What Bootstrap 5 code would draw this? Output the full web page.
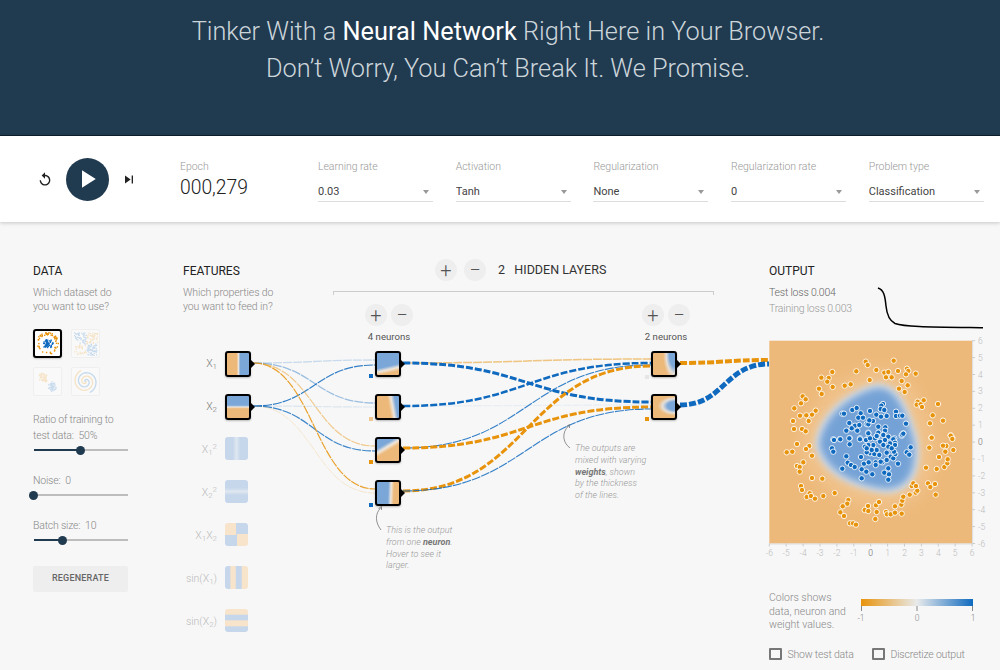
<!DOCTYPE html>
<html lang="en">
<head>
    <meta charset="UTF-8">
    <meta name="viewport" content="width=device-width, initial-scale=1.0">
    <title>Tinker With a Neural Network</title>
    <link rel="stylesheet" href="https://cdn.jsdelivr.net/npm/bootstrap@5.3.0/dist/css/bootstrap.min.css">
    <style>
        :root { --dark: #203a50; --heat-o: #edb97a; --heat-b: #7aa6d8; --fade-o: #f8e3cb; --fade-b: #c6d7ec; }
        html, body { height: 670px; overflow: hidden; }
        body { background: #f7f7f7; font-family: Roboto, "Liberation Sans", sans-serif; font-weight: 300; color: #777; }

        .page-head { height: 136px; background: var(--dark); border-bottom: 1px solid #0e1f2a; padding: 13px 0 0 16px; color: #ccd5da; }
        .page-head h1 { font-size: 25.3px; line-height: 37px; font-weight: 300; margin: 0; }
        .page-head b { font-weight: 400; color: #fff; }

        .ctl-bar { height: 86px; background: #fff; box-shadow: 0 1px 4px rgba(0,0,0,.2); padding: 24px 0 0 37px; position: relative; }
        .ctl-play { margin-top: -2.5px; }
        .icon-btn { border: 0; background: none; padding: 0; width: 16px; height: 43px; display: flex; align-items: center; justify-content: center; }
        .play-btn { width: 43px; height: 43px; border-radius: 50%; background: var(--dark); border: 0; padding: 0; display: flex; align-items: center; justify-content: center; margin: 0 12.5px; }
        .ctl-group { width: 115px; margin-right: 22.7px; }
        .ctl-group.epoch-box { width: 138px; margin: 0 0 0 43px; }
        .ctl-label { font-size: 10.5px; letter-spacing: -.05px; line-height: 14px; color: #999; display: block; margin: 0; }
        .epoch-val { font-size: 19.3px; line-height: 24px; color: #222; margin-top: 1.5px; font-weight: 300; }
        .ctl-pick { margin-top: 6.5px; position: relative; }
        .ctl-pick::after { content: ""; position: absolute; right: 4px; top: 9px; border: 3.5px solid transparent; border-top: 4px solid #999; border-bottom: 0; }
        .ctl-pick .form-select { background-image: none; background-color: transparent; border: 0; border-bottom: 1px solid #ddd; border-radius: 0; padding: 0; height: 21.5px; font-size: 11px; font-weight: 400; line-height: 21px; color: #444; box-shadow: none; font-family: inherit; }

        .work-area { height: 448px; }
        .sec-title { font-size: 12px; line-height: 16px; font-weight: 400; color: #222; text-transform: uppercase; margin: 41px 0 0; }
        .sec-note { font-size: 10.5px; letter-spacing: -.1px; line-height: 13.5px; color: #888; margin: 7px 0 0; }

        .data-col { width: 183px; padding-left: 33px; flex: none; }
        .set-grid { display: grid; grid-template-columns: 29px 29px; gap: 9px; margin-top: 16px; }
        .set-thumb { width: 29px; height: 29px; border: 1px solid #efefef; border-radius: 2px; background: #f9f9f9; display: block; }
        .set-thumb.picked { border: 2px solid #000; border-radius: 3px; background: #fff; box-shadow: 0 1px 2px rgba(0,0,0,.2); }
        .set-thumb svg { display: block; width: 100%; height: 100%; }
        .knob-label { font-size: 10.5px; letter-spacing: -.2px; line-height: 16px; color: #888; margin: 17px 0 0; white-space: pre; }
        .knob-label.first { margin-top: 16px; }
        .knob-wrap { position: relative; width: 94px; height: 12px; margin-left: .6px; }
        .knob-track { position: absolute; left: 0; right: 0; top: 5px; height: 1.5px; background: #bdbdbd; }
        .knob-fill { position: absolute; left: 0; top: 5px; height: 1.5px; background: var(--dark); }
        .knob-dot { position: absolute; top: 1.5px; width: 9px; height: 9px; margin-left: -4.5px; border-radius: 50%; background: var(--dark); }
        .regen-btn { width: 95px; height: 26px; margin-top: 20px; padding: 0; background: #eee; border: 0; border-radius: 2px; font-size: 9px; font-weight: 500; letter-spacing: .2px; color: #666; text-transform: uppercase; }

        .net-canvas { width: 586px; flex: none; position: relative; display: flex; }
        .link-layer { position: absolute; left: 0; top: 0; width: 586px; height: 448px; overflow: visible; }
        .feat-col { width: 150px; flex: none; position: relative; }
        .feat-list { margin-top: 38px; }
        .feat-row { height: 43px; display: flex; }
        .feat-name { width: 42px; padding-right: 8px; text-align: right; height: 26px; line-height: 26px; font-size: 10.5px; color: #bbb; white-space: nowrap; }
        .feat-name.on { color: #777; }
        .feat-name sub, .feat-name sup { font-size: 8px; line-height: 0; }
        .heat-box { position: relative; width: 26px; height: 26px; border: 2px solid #000; border-radius: 3px; box-shadow: 0 1px 2px rgba(0,0,0,.25); flex: none; }
        .heat-box::after { content: ""; position: absolute; right: -6px; top: 7px; border-left: 4px solid #000; border-top: 4px solid transparent; border-bottom: 4px solid transparent; }
        .heat-box.off { width: 23px; height: 23px; border: 0; box-shadow: none; }
        .heat-box.off::after { display: none; }
        .net-node { position: absolute; }
        .wt-mark { position: absolute; width: 4px; height: 3.5px; }

        .hm-x1 { background: linear-gradient(90deg, var(--heat-o) 44%, #eee6dc 52%, var(--heat-b) 60%); }
        .hm-x2 { background: linear-gradient(180deg, var(--heat-b) 42%, #eee6dc 50%, var(--heat-o) 58%); }
        .hm-x1s { background: linear-gradient(90deg, var(--fade-b) 34%, #dfe7f1 50%, var(--fade-b) 66%); }
        .hm-x2s { background: linear-gradient(180deg, var(--fade-b) 34%, #dfe7f1 50%, var(--fade-b) 66%); }
        .hm-xy { background: conic-gradient(var(--fade-b) 0 25%, var(--fade-o) 0 50%, var(--fade-b) 0 75%, var(--fade-o) 0); }
        .hm-sx { background: linear-gradient(90deg, var(--fade-b) 20%, var(--fade-o) 26% 44%, var(--fade-b) 50% 70%, var(--fade-o) 76%); }
        .hm-sy { background: linear-gradient(180deg, var(--fade-o) 22%, var(--fade-b) 28% 46%, var(--fade-o) 52% 72%, var(--fade-b) 78%); }
        .hm-a { background: linear-gradient(167deg, var(--heat-b) 58%, #eee6dc 71%, var(--heat-o) 84%); }
        .hm-b { background: linear-gradient(80deg, var(--heat-o) 54%, #eee6dc 68%, var(--heat-b) 82%); }
        .hm-c { background: linear-gradient(149deg, var(--heat-b) 28%, #eee6dc 40%, var(--heat-o) 52%); }
        .hm-d { background: linear-gradient(92deg, var(--heat-b) 50%, #eee6dc 63%, var(--heat-o) 76%); }
        .hm-e { background: radial-gradient(ellipse 55% 120% at 100% 8%, var(--heat-b) 45%, #e6dfd8 72%, var(--heat-o) 98%); }
        .hm-f { background: radial-gradient(ellipse 80% 46% at 100% 45%, var(--heat-b) 42%, #e6dfd8 70%, var(--heat-o) 98%); }

        .net-col { width: 381px; flex: none; position: relative; padding-top: 37px; }
        .layer-head { display: flex; align-items: center; padding-left: 102px; gap: 7px; }
        .layer-count { font-size: 12.5px; font-weight: 400; color: #333; margin-left: 5px; white-space: pre; }
        .round-btn { width: 22px; height: 22px; padding: 0; border: 0; border-radius: 50%; background: #eee; color: #555; font-size: 20px; line-height: 21px; font-weight: 300; }
        .span-bracket { height: 4px; margin-top: 10px; border: 1px solid #ccc; border-bottom: 0; }
        .layer-ctl { position: absolute; width: 60px; margin-left: -30px; text-align: center; }
        .layer-ctl .btn-pair { display: flex; justify-content: center; gap: 4px; }
        .layer-ctl p { margin: 5px 0 0; font-size: 9.6px; line-height: 12px; font-weight: 400; color: #555; white-space: nowrap; }
        .net-tip { position: absolute; font-size: 9px; line-height: 11.8px; font-style: italic; color: #999; white-space: nowrap; margin: 0; }
        .net-tip b { font-weight: 700; color: #777; }

        .out-col { flex: 1; min-width: 0; }
        .loss-row { height: 55px; margin-top: 6px; display: flex; }
        .loss-text { width: 108px; flex: none; font-size: 10.5px; letter-spacing: -.2px; line-height: 16px; color: #999; }
        .loss-text div:first-child { color: #666; }
        .plot-svg { display: block; width: 231px; height: 225px; overflow: visible; }
        .plot-svg text { font-family: Roboto, "Liberation Sans", sans-serif; font-size: 8.5px; fill: #bbb; }
        .plot-svg text.zero { fill: #666; }
        .legend-row { display: flex; margin-top: 26px; height: 40.5px; }
        .legend-text { width: 92px; flex: none; font-size: 10.5px; line-height: 13.5px; color: #888; }
        .legend-svg { width: 125px; height: 32px; display: block; margin-top: 8px; overflow: visible; }
        .legend-svg text { font-family: Roboto, "Liberation Sans", sans-serif; font-size: 8.5px; fill: #888; }
        .opt-row { display: flex; margin-top: 16px; font-size: 10.5px; letter-spacing: -.2px; line-height: 13px; color: #888; }
        .opt-row label { display: flex; align-items: center; gap: 6px; margin-right: 0; }
        .opt-row label:first-child { width: 103px; }
        .opt-row .form-check-input { width: 12.5px; height: 12.5px; margin: 0; background-color: transparent; border: 2px solid #777; border-radius: 1px; box-shadow: none; }
    </style>
</head>
<body>

<header class="page-head text-center">
    <h1>Tinker With a <b>Neural Network</b> Right Here in Your Browser.</h1>
    <h1>Don’t Worry, You Can’t Break It. We Promise.</h1>
</header>

<section class="ctl-bar d-flex align-items-start">
    <div class="d-flex ctl-play">
        <button class="icon-btn" aria-label="Reset"><svg width="19" height="19" viewBox="0 0 24 24"><path fill="#222" d="M12 5V1L7 6l5 5V7c3.31 0 6 2.69 6 6s-2.69 6-6 6-6-2.69-6-6H4c0 4.42 3.58 8 8 8s8-3.58 8-8-3.58-8-8-8z"/></svg></button>
        <button class="play-btn" aria-label="Play"><svg width="30" height="30" viewBox="0 0 24 24"><path fill="#fff" d="M8 5v14l11-7z"/></svg></button>
        <button class="icon-btn" aria-label="Step"><svg width="19" height="19" viewBox="0 0 24 24"><path fill="#222" d="M6 18l8.5-6L6 6v12zM16 6v12h2V6h-2z"/></svg></button>
    </div>
    <div class="ctl-group epoch-box">
        <span class="ctl-label">Epoch</span>
        <div class="epoch-val">000,279</div>
    </div>
    <div class="ctl-group">
        <label class="ctl-label">Learning rate</label>
        <div class="ctl-pick"><select class="form-select"><option>0.03</option></select></div>
    </div>
    <div class="ctl-group">
        <label class="ctl-label">Activation</label>
        <div class="ctl-pick"><select class="form-select"><option>Tanh</option></select></div>
    </div>
    <div class="ctl-group">
        <label class="ctl-label">Regularization</label>
        <div class="ctl-pick"><select class="form-select"><option>None</option></select></div>
    </div>
    <div class="ctl-group">
        <label class="ctl-label">Regularization rate</label>
        <div class="ctl-pick"><select class="form-select"><option>0</option></select></div>
    </div>
    <div class="ctl-group me-0">
        <label class="ctl-label">Problem type</label>
        <div class="ctl-pick"><select class="form-select"><option>Classification</option></select></div>
    </div>
</section>

<main class="work-area d-flex">
    <div class="data-col">
        <h4 class="sec-title">Data</h4>
        <p class="sec-note">Which dataset do<br>you want to use?</p>
        <div class="set-grid">
            <div class="set-thumb picked" id="setCircle"></div>
            <div class="set-thumb" id="setXor"></div>
            <div class="set-thumb" id="setGauss"></div>
            <div class="set-thumb" id="setSpiral"></div>
        </div>
        <p class="knob-label first">Ratio of training to<br>test data:  50%</p>
        <div class="knob-wrap"><div class="knob-track"></div><div class="knob-fill" style="width:50%"></div><div class="knob-dot" style="left:50%"></div></div>
        <p class="knob-label">Noise:  0</p>
        <div class="knob-wrap"><div class="knob-track"></div><div class="knob-fill" style="width:0"></div><div class="knob-dot" style="left:0"></div></div>
        <p class="knob-label">Batch size:  10</p>
        <div class="knob-wrap"><div class="knob-track"></div><div class="knob-fill" style="width:31%"></div><div class="knob-dot" style="left:31%"></div></div>
        <button class="btn regen-btn">Regenerate</button>
    </div>

    <div class="net-canvas" id="netCanvas">
        <svg class="link-layer" id="linkLayer" viewBox="183 222 586 448"></svg>

        <div class="feat-col">
            <h4 class="sec-title">Features</h4>
            <p class="sec-note">Which properties do<br>you want to feed in?</p>
            <div class="feat-list">
                <div class="feat-row"><div class="feat-name on">X<sub>1</sub></div><div class="heat-box hm-x1"></div></div>
                <div class="feat-row"><div class="feat-name on">X<sub>2</sub></div><div class="heat-box hm-x2"></div></div>
                <div class="feat-row"><div class="feat-name">X<sub>1</sub><sup>2</sup></div><div class="heat-box off hm-x1s"></div></div>
                <div class="feat-row"><div class="feat-name">X<sub>2</sub><sup>2</sup></div><div class="heat-box off hm-x2s"></div></div>
                <div class="feat-row"><div class="feat-name">X<sub>1</sub>X<sub>2</sub></div><div class="heat-box off hm-xy"></div></div>
                <div class="feat-row"><div class="feat-name">sin(X<sub>1</sub>)</div><div class="heat-box off hm-sx"></div></div>
                <div class="feat-row"><div class="feat-name">sin(X<sub>2</sub>)</div><div class="heat-box off hm-sy"></div></div>
            </div>
        </div>

        <div class="net-col">
            <div class="layer-head">
                <button class="btn round-btn">+</button>
                <button class="btn round-btn">−</button>
                <span class="layer-count">2   HIDDEN LAYERS</span>
            </div>
            <div class="span-bracket"></div>
        </div>

        <p class="net-tip" style="left:203px;top:303px">This is the output<br>from one <b>neuron</b>.<br>Hover to see it<br>larger.</p>
        <p class="net-tip" style="left:392px;top:221px">The outputs are<br>mixed with varying<br><b>weights</b>, shown<br>by the thickness<br>of the lines.</p>
    </div>

    <div class="out-col">
        <h4 class="sec-title">Output</h4>
        <div class="loss-row">
            <div class="loss-text"><div>Test loss 0.004</div><div>Training loss 0.003</div></div>
            <svg width="108" height="44" viewBox="877 285 108 44"><path d="M878 288 C884 290 885 296 886 306 C887 316 890 321 895 323.5 C905 327 930 327 983 327.7" fill="none" stroke="#000" stroke-width="1.5"/></svg>
        </div>
        <svg class="plot-svg" id="plotSvg" viewBox="769 340 231 225"></svg>
        <div class="legend-row">
            <div class="legend-text">Colors shows<br>data, neuron and<br>weight values.</div>
            <svg class="legend-svg" viewBox="861 599 125 32">
                <defs><linearGradient id="legendGrad"><stop offset="0" stop-color="#e8930c"/><stop offset=".5" stop-color="#e8eaeb"/><stop offset="1" stop-color="#0f6abf"/></linearGradient></defs>
                <rect x="861" y="599" width="112" height="7" fill="url(#legendGrad)"/>
                <path d="M861.5 606v5M917 606v5M972.5 606v5" stroke="#888" stroke-width="1"/>
                <text x="861" y="621" text-anchor="middle">-1</text>
                <text x="917" y="621" text-anchor="middle">0</text>
                <text x="973" y="621" text-anchor="middle">1</text>
            </svg>
        </div>
        <div class="opt-row">
            <label><input type="checkbox" class="form-check-input">Show test data</label>
            <label><input type="checkbox" class="form-check-input">Discretize output</label>
        </div>
    </div>
</main>

<script>
    const ORANGE = '#e8930c';
    const BLUE = '#0f6abf';
    const NS = 'http://www.w3.org/2000/svg';

    // simple repeatable random so the thumbnails don't change between runs
    let seed = 7;
    function rnd() {
        seed = (seed * 16807) % 2147483647;
        return seed / 2147483647;
    }

    function dotsSvg(dots, size, opacity, dotSize) {
        let out = `<svg viewBox="0 0 ${size} ${size}"><g opacity="${opacity}">`;
        dots.forEach(d => {
            out += `<rect x="${d[0].toFixed(1)}" y="${d[1].toFixed(1)}" width="${dotSize}" height="${dotSize}" fill="${d[2]}"/>`;
        });
        return out + '</g></svg>';
    }

    function drawThumbs() {
        const circle = [];
        for (let i = 0; i < 55; i++) {
            const a = rnd() * 6.283, r = 8.5 + rnd() * 2.5;
            circle.push([11.8 + r * Math.cos(a), 11.8 + r * Math.sin(a), ORANGE]);
            const a2 = rnd() * 6.283, r2 = rnd() * 5.5;
            circle.push([11.8 + r2 * Math.cos(a2), 11.8 + r2 * Math.sin(a2), BLUE]);
        }
        document.getElementById('setCircle').innerHTML = dotsSvg(circle, 25, 1, 1.4);

        const xor = [];
        for (let i = 0; i < 180; i++) {
            const x = 2 + rnd() * 23, y = 2 + rnd() * 23;
            xor.push([x, y, (x - 13.5) * (y - 13.5) > 0 ? BLUE : ORANGE]);
        }
        document.getElementById('setXor').innerHTML = dotsSvg(xor, 27, .22, 1.2);

        const gauss = [];
        for (let i = 0; i < 60; i++) {
            gauss.push([9 + (rnd() + rnd() - 1) * 5, 9 + (rnd() + rnd() - 1) * 5, ORANGE]);
            gauss.push([18 + (rnd() + rnd() - 1) * 5, 18 + (rnd() + rnd() - 1) * 5, BLUE]);
        }
        document.getElementById('setGauss').innerHTML = dotsSvg(gauss, 27, .2, 1.2);

        let spiral = '<svg viewBox="0 0 27 27"><g fill="none" stroke-width="1.3" opacity=".22">';
        [[ORANGE, 0], [BLUE, Math.PI]].forEach(arm => {
            let pts = '';
            for (let t = 0; t < 60; t++) {
                const r = t * 0.2, a = t * 0.18 + arm[1];
                pts += `${(13.5 + r * Math.cos(a)).toFixed(1)},${(13.5 + r * Math.sin(a)).toFixed(1)} `;
            }
            spiral += `<polyline points="${pts}" stroke="${arm[0]}"/>`;
        });
        document.getElementById('setSpiral').innerHTML = spiral + '</g></svg>';
    }

    // link list in page coordinates: x0, y0, x1, y1, colour, width, opacity
    const links = [
        [253, 363, 375, 360, BLUE, 1.3, .2],
        [253, 406, 375, 365, BLUE, 1.2, .85],
        [253, 363, 375, 403, BLUE, 1.3, .4],
        [253, 406, 375, 407, BLUE, 1.2, .12],
        [253, 363, 375, 446, ORANGE, 1.2, .45],
        [253, 406, 375, 451, BLUE, 1.2, .8],
        [253, 363, 375, 489, ORANGE, 1.2, .85],
        [253, 406, 375, 493, ORANGE, 1, .18],

        [403, 363, 651, 359, ORANGE, 1.5, .5],
        [403, 363, 651, 402, BLUE, 3, 1],
        [403, 406, 651, 363, BLUE, 2.5, 1],
        [403, 406, 651, 405, BLUE, 1, .08],
        [403, 448, 651, 365, BLUE, 1.1, .85],
        [403, 448, 651, 407, ORANGE, 3, 1],
        [403, 491, 651, 366, ORANGE, 3, 1],
        [403, 491, 651, 409, BLUE, 1.1, .85],

        [680, 363, 769, 360, ORANGE, 4, 1],
        [680, 405, 769, 364, BLUE, 5, 1]
    ];

    function drawLinks() {
        const layer = document.getElementById('linkLayer');
        links.forEach(l => {
            const mid = (l[0] + l[2]) / 2;
            const path = document.createElementNS(NS, 'path');
            path.setAttribute('d', `M${l[0]} ${l[1]} C${mid} ${l[1]} ${mid} ${l[3]} ${l[2]} ${l[3]}`);
            path.setAttribute('fill', 'none');
            path.setAttribute('stroke', l[4]);
            path.setAttribute('stroke-width', l[5]);
            path.setAttribute('stroke-opacity', l[6]);
            path.setAttribute('stroke-dasharray', l[5] >= 2.5 ? '7 2' : '9 1');
            layer.appendChild(path);
        });
        layer.innerHTML += `
            <g fill="none" stroke="#777" stroke-width=".8">
                <path d="M381 530 C375 522 375 514 380.5 508"/><path d="M378.5 508.5 L381.5 506.5 L381.5 510"/>
                <path d="M570 448 C562 442 562 432 568.5 426"/><path d="M566.5 426.5 L569.5 424.5 L569.5 428"/>
            </g>`;
    }

    const neurons = [
        [375, 351, 'hm-a', BLUE, 374], [375, 394, 'hm-b', '#f0c68f', 417], [375, 437, 'hm-c', ORANGE, 460], [375, 480, 'hm-d', BLUE, 503],
        [651, 351, 'hm-e', '#e6e6e6', 375], [651, 394, 'hm-f', ORANGE, 417]
    ];
    const layerCtls = [[389, 304], [666, 304]];

    function drawNodes() {
        const canvas = document.getElementById('netCanvas');
        neurons.forEach(n => {
            const box = document.createElement('div');
            box.className = `net-node heat-box ${n[2]}`;
            box.style.left = `${n[0] - 183}px`;
            box.style.top = `${n[1] - 222}px`;
            canvas.appendChild(box);

            const mark = document.createElement('div');
            mark.className = 'wt-mark';
            mark.style.left = `${n[0] - 6 - 183}px`;
            mark.style.top = `${n[4] - 222}px`;
            mark.style.background = n[3];
            canvas.appendChild(mark);
        });
        layerCtls.forEach((c, i) => {
            const ctl = document.createElement('div');
            ctl.className = 'layer-ctl';
            ctl.style.left = `${c[0] - 183}px`;
            ctl.style.top = `${c[1] - 222}px`;
            ctl.innerHTML = `<div class="btn-pair"><button class="btn round-btn">+</button><button class="btn round-btn">−</button></div><p>${i === 0 ? 4 : 2} neurons</p>`;
            canvas.appendChild(ctl);
        });
    }

    // dots read off the picture at 3x, offset from (760,260) and (760,430)
    const upperOrange = [[317,305],[323,315],[401,302],[349,330],[373,338],[385,336],[414,333],[441,326],[445,333],[438,343],[467,341],[289,334],[217,336],[184,353],[206,354],[202,365],[329,360],[378,352],[395,352],[425,363],[443,376],[417,386],[434,396],[272,373],[254,377],[218,381],[177,386],[185,402],[128,409],[137,418],[123,430],[103,445],[167,452],[156,464],[139,466],[120,467],[146,483],[99,483],[102,507],[126,507],[137,514],[473,425],[491,421],[470,434],[482,433],[486,441],[534,432],[518,466],[549,482],[510,490],[572,526],[577,533],[514,533]];
    const upperBlue = [[247,461],[252,461],[277,450],[290,444],[369,432],[364,437],[362,447],[373,450],[330,453],[349,464],[363,470],[380,468],[408,455],[408,468],[420,467],[427,467],[302,460],[295,473],[309,473],[268,489],[285,497],[298,495],[320,492],[325,493],[339,483],[328,481],[355,500],[376,502],[375,512],[259,512],[275,505],[292,512],[325,518],[355,518],[370,524],[438,491],[430,520],[425,527],[269,534],[240,537],[300,535],[345,535],[384,531],[403,535],[327,530],[220,538],[352,528]];
    const lowerOrange = [[111,42],[80,67],[97,65],[148,48],[138,57],[156,77],[130,97],[111,108],[119,111],[119,125],[156,144],[187,146],[123,168],[126,180],[149,190],[140,201],[153,198],[165,206],[190,198],[224,189],[265,210],[262,221],[248,229],[241,247],[252,258],[270,280],[279,280],[288,284],[346,267],[350,246],[348,226],[357,216],[324,228],[314,240],[325,243],[378,246],[381,253],[392,253],[405,248],[405,229],[425,251],[424,224],[427,212],[430,200],[449,194],[467,188],[472,182],[455,168],[460,160],[468,168],[504,160],[511,171],[525,162],[527,194],[498,113],[530,117],[553,111],[562,100],[563,88],[537,81],[580,60],[556,65],[559,48],[549,47],[508,53],[515,23],[572,17],[577,27]];
    const lowerBlue = [[222,30],[241,28],[268,25],[269,43],[300,28],[216,55],[220,65],[259,79],[303,81],[263,98],[273,105],[284,111],[247,116],[305,145],[305,118],[319,125],[337,133],[312,101],[326,97],[330,70],[320,67],[343,72],[347,97],[367,97],[347,105],[380,68],[392,80],[400,85],[406,72],[402,65],[414,101],[440,67],[448,74],[452,52],[426,14],[430,11],[385,115],[373,128],[387,133],[385,149],[358,75],[362,95],[318,30],[325,10],[330,25],[350,18],[370,15],[385,20],[400,28],[405,38],[390,40],[375,30],[360,35],[340,45],[325,45],[315,50],[405,45],[385,50],[370,45],[350,60],[335,60],[320,55],[395,55],[380,90]];

    function drawPlot() {
        const blob = 'M818 445 C820 420 845 395 875 387 C895 384 905 405 915 440 C920 475 905 491 885 490 C860 487 825 475 818 445 Z';
        const x0 = 769.3, y0 = 340.7, step = 16.9;
        let out = `
            <defs>
                <filter id="soft8" x="-30%" y="-30%" width="160%" height="160%"><feGaussianBlur stdDeviation="9"/></filter>
                <filter id="soft3" x="-20%" y="-20%" width="140%" height="140%"><feGaussianBlur stdDeviation="3"/></filter>
                <filter id="soft4" x="-20%" y="-20%" width="140%" height="140%"><feGaussianBlur stdDeviation="4"/></filter>
                <clipPath id="plotClip"><rect x="${x0}" y="${y0}" width="202.8" height="202.8"/></clipPath>
            </defs>
            <rect x="${x0}" y="${y0}" width="202.8" height="202.8" fill="#edb97a"/>
            <g clip-path="url(#plotClip)">
                <path d="${blob}" fill="#f1c693" stroke="#f1c693" stroke-width="30" filter="url(#soft8)"/>
                <path d="${blob}" fill="#f6f3f0" stroke="#f6f3f0" stroke-width="5" filter="url(#soft3)"/>
                <path d="${blob}" fill="#74a2d6" filter="url(#soft4)"/>
            </g>`;

        const dot = (cx, cy, col) => `<circle cx="${cx.toFixed(1)}" cy="${cy.toFixed(1)}" r="2.7" fill="${col}" stroke="#fff" stroke-opacity=".85" stroke-width="1"/>`;
        upperOrange.forEach(p => out += dot(760 + p[0] / 3, 260 + p[1] / 3, ORANGE));
        upperBlue.forEach(p => out += dot(760 + p[0] / 3, 260 + p[1] / 3, BLUE));
        lowerOrange.forEach(p => out += dot(760 + p[0] / 3, 430 + p[1] / 3, ORANGE));
        lowerBlue.forEach(p => out += dot(760 + p[0] / 3, 430 + p[1] / 3, BLUE));

        // axes
        const xb = y0 + 202.8, xr = x0 + 202.8;
        out += `<path d="M${x0} ${xb + .5}H${xr}M${xr + .5} ${y0}V${xb}" stroke="#ddd" fill="none"/>`;
        for (let i = -6; i <= 6; i++) {
            const x = x0 + (i + 6) * step, y = y0 + (6 - i) * step;
            const cls = i === 0 ? ' class="zero"' : '';
            out += `<path d="M${x} ${xb}v3M${xr} ${y}h3" stroke="#ccc" fill="none"/>`;
            out += `<text x="${x}" y="${xb + 12.5}" text-anchor="middle"${cls}>${i}</text>`;
            out += `<text x="${xr + 6}" y="${y + 3}"${cls}>${i}</text>`;
        }
        document.getElementById('plotSvg').innerHTML = out;
    }

    drawThumbs();
    drawLinks();
    drawNodes();
    drawPlot();
</script>

<script src="https://cdn.jsdelivr.net/npm/bootstrap@5.3.0/dist/js/bootstrap.bundle.min.js"></script>
</body>
</html>
